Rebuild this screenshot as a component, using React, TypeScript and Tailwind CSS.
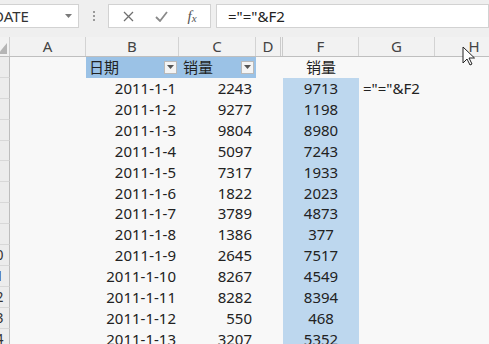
const FONT = "font-['Noto_Sans','Noto_Sans_CJK_SC',sans-serif]";

const ROWS: [string, number, number][] = [
  ["2011-1-1", 2243, 9713],
  ["2011-1-2", 9277, 1198],
  ["2011-1-3", 9804, 8980],
  ["2011-1-4", 5097, 7243],
  ["2011-1-5", 7317, 1933],
  ["2011-1-6", 1822, 2023],
  ["2011-1-7", 3789, 4873],
  ["2011-1-8", 1386, 377],
  ["2011-1-9", 2645, 7517],
  ["2011-1-10", 8267, 4549],
  ["2011-1-11", 8282, 8394],
  ["2011-1-12", 550, 468],
  ["2011-1-13", 3207, 5352],
];

function FilterButton() {
  return (
    <div className="flex h-[13px] w-[13px] items-center justify-center border border-[#b9b9b9] bg-[#f4f4f4]">
      <svg width="7" height="4" viewBox="0 0 7 4">
        <path d="M0 0h7L3.5 4z" fill="#555" />
      </svg>
    </div>
  );
}

function RowHeader({ n }: { n: number }) {
  return (
    <div className="-ml-[18px] flex h-full w-[28px] shrink-0 items-center justify-center border-r border-b border-r-[#bdbdbd] border-b-[#d8d8d8] bg-[#ececec] text-[14px] text-[#333]">
      {n}
    </div>
  );
}

export default function App() {
  return (
    <div className={`relative h-[344px] w-[489px] overflow-hidden bg-[#f8f8f8] ${FONT}`}>
      {/* formula bar */}
      <div className="flex h-[37px] items-start gap-0 bg-[#efefef] pt-[4px]">
        <div className="-ml-[3px] flex h-[24px] w-[82px] shrink-0 items-center justify-between border border-[#d2d2d2] bg-white pr-[6px]">
          <span className="-ml-[5px] text-[15px] text-[#333]">DATE</span>
          <svg width="7" height="4" viewBox="0 0 7 4">
            <path d="M0 0h7L3.5 4z" fill="#7a7a7a" />
          </svg>
        </div>
        <div className="flex h-[24px] w-[29px] shrink-0 flex-col items-center justify-center gap-[2px]">
          <span className="h-[2px] w-[2px] bg-[#9a9a9a]" />
          <span className="h-[2px] w-[2px] bg-[#9a9a9a]" />
          <span className="h-[2px] w-[2px] bg-[#9a9a9a]" />
        </div>
        <div className="flex h-[24px] w-[103px] shrink-0 items-center border border-[#d2d2d2] bg-white">
          <div className="flex w-[38px] justify-center">
            <svg width="11" height="11" viewBox="0 0 11 11">
              <path d="M1 1l9 9M10 1l-9 9" stroke="#6f6f6f" strokeWidth="1.3" />
            </svg>
          </div>
          <div className="flex w-[28px] justify-center">
            <svg width="13" height="11" viewBox="0 0 13 11">
              <path d="M1 6l4 4 7-9" stroke="#8a8a8a" strokeWidth="1.8" fill="none" />
            </svg>
          </div>
          <div className="flex w-[34px] justify-center font-['Liberation_Serif',serif] italic text-[#555]">
            <span className="text-[15px] leading-none">f</span>
            <span className="mt-[4px] text-[11px] leading-none">x</span>
          </div>
        </div>
        <div className="ml-[5px] flex h-[24px] flex-1 items-center border border-[#d2d2d2] bg-white pl-[11px] text-[15px] text-[#222]">
          ="="&amp;F2
        </div>
      </div>

      {/* column headers */}
      <div className="flex h-[20px] border-b border-[#bfbfbf] bg-[#f2f2f2] text-[15px] text-[#444]">
        <div className="-ml-[18px] flex w-[28px] shrink-0 items-end justify-end border-r border-[#cfcfcf] pr-[2px] pb-[2px]">
          <svg width="9" height="11" viewBox="0 0 9 11">
            <path d="M9 0v11H0z" fill="#b5b5b5" />
          </svg>
        </div>
        <div className="flex w-[76px] shrink-0 items-center justify-center border-r border-[#d3d3d3]">A</div>
        <div className="flex w-[93px] shrink-0 items-center justify-center border-r border-[#d3d3d3]">B</div>
        <div className="flex w-[77px] shrink-0 items-center justify-center border-r border-[#d3d3d3]">C</div>
        <div className="flex w-[27px] shrink-0 items-center justify-center border-r-[3px] border-double border-[#cbcbcb]">D</div>
        <div className="flex w-[76px] shrink-0 items-center justify-center border-r border-[#d3d3d3]">F</div>
        <div className="flex w-[76px] shrink-0 items-center justify-center border-r border-[#d3d3d3]">G</div>
        <div className="flex w-[78px] shrink-0 items-center justify-center">H</div>
      </div>

      {/* row 1 */}
      <div className="flex h-[20.9px] text-[15px] text-[#222]">
        <RowHeader n={1} />
        <div className="w-[76px] shrink-0" />
        <div className="flex w-[93px] shrink-0 items-center justify-between bg-[#9bc2e6] pl-[3px] pr-[2px]">
          <span>日期</span>
          <FilterButton />
        </div>
        <div className="flex w-[77px] shrink-0 items-center justify-between bg-[#9bc2e6] pl-[4px] pr-[2px]">
          <span>销量</span>
          <FilterButton />
        </div>
        <div className="w-[27px] shrink-0" />
        <div className="flex w-[76px] shrink-0 items-center justify-center">销量</div>
        <div className="w-[76px] shrink-0" />
      </div>

      {ROWS.map(([date, qty, f], i) => (
        <div key={date} className="flex h-[20.9px] text-[15px] text-[#222]">
          <RowHeader n={i + 2} />
          <div className="w-[76px] shrink-0" />
          <div className="flex w-[93px] shrink-0 items-center justify-end pr-[3px]">{date}</div>
          <div className="flex w-[77px] shrink-0 items-center justify-end pr-[4px]">{qty}</div>
          <div className="w-[27px] shrink-0" />
          <div className="flex w-[76px] shrink-0 items-center justify-center bg-[#bdd7ee]">{f}</div>
          <div className="flex w-[76px] shrink-0 items-center pl-[4px]">
            {i === 0 ? '="="&F2' : ""}
          </div>
        </div>
      ))}

      {/* mouse cursor */}
      <svg
        className="absolute left-[462px] top-[46px]"
        width="13"
        height="20"
        viewBox="0 0 13 20"
      >
        <path
          d="M1 1v16l4-4 3 6 2-1-3-6h5.5z"
          fill="#fff"
          stroke="#222"
          strokeWidth="1"
          strokeLinejoin="round"
        />
      </svg>
    </div>
  );
}
